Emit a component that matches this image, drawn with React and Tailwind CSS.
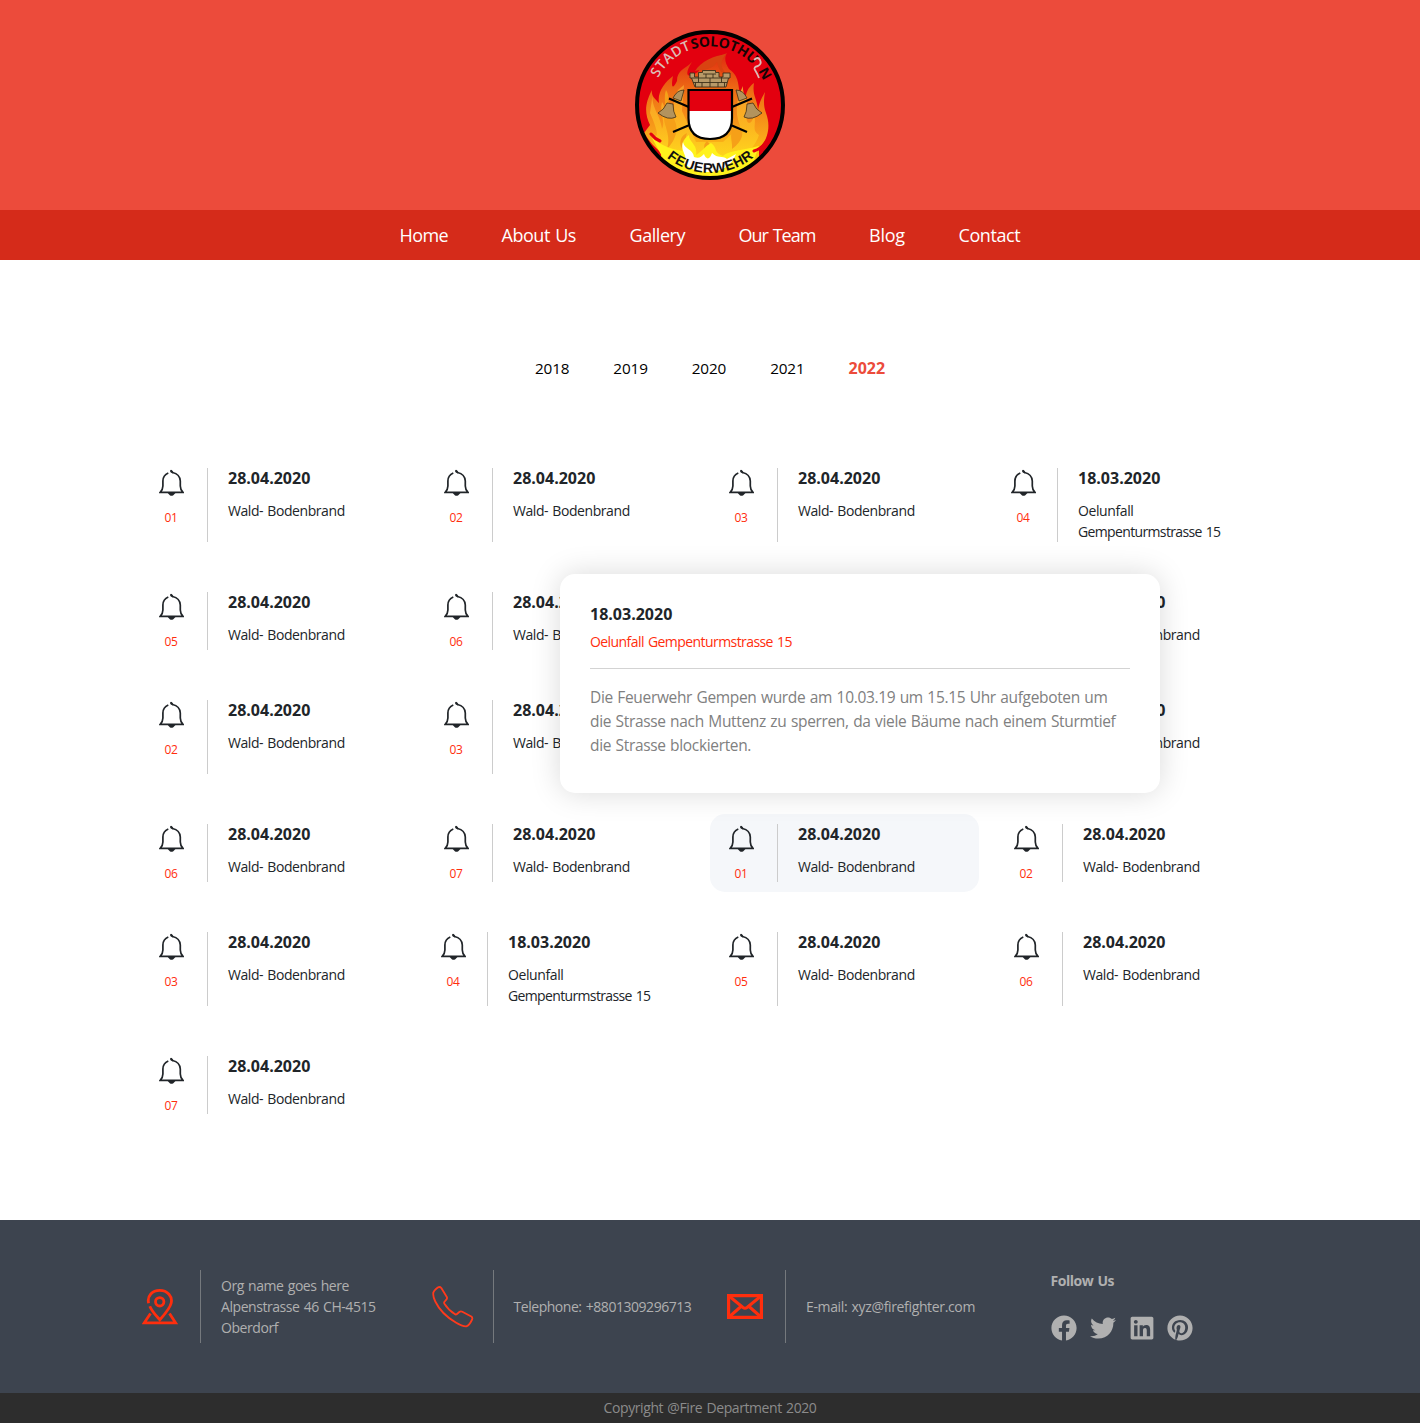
import { FaFacebook, FaTwitter, FaLinkedin, FaPinterest } from 'react-icons/fa'

const navItems = [
  { label: 'Home', style: 'w-[48px] tracking-[-0.6px]' },
  { label: 'About Us', style: 'w-[74px] tracking-[-0.45px]' },
  { label: 'Gallery', style: 'w-[55px] tracking-[-0.45px]' },
  { label: 'Our Team', style: 'w-[76.5px] tracking-[-0.98px]' },
  { label: 'Blog', style: 'w-[35.5px] tracking-[-0.25px]' },
  { label: 'Contact', style: 'w-[62px] tracking-[-0.4px]' },
]

const years = ['2018', '2019', '2020', '2021', '2022']

const cycle = ['01', '02', '03', '04', '05', '06', '07']
const incidents = [...cycle, ...cycle, ...cycle].map((number, i) => ({
  number,
  long: number === '04',
  active: i === 14,
}))

function Logo() {
  return (
    <svg viewBox="0 0 150 150" className="size-[150px]">
      <defs>
        <linearGradient id="flame" x1="0" y1="0" x2="0" y2="1">
          <stop offset="0" stopColor="#df2a10" />
          <stop offset="0.3" stopColor="#ee6d15" />
          <stop offset="0.65" stopColor="#f9a51a" />
          <stop offset="1" stopColor="#fff200" />
        </linearGradient>
        <linearGradient id="flameCore" x1="0" y1="0" x2="0" y2="1">
          <stop offset="0" stopColor="#f8982a" />
          <stop offset="0.5" stopColor="#fcb81f" />
          <stop offset="1" stopColor="#ffe61c" />
        </linearGradient>
        <clipPath id="disc"><circle cx="75" cy="75" r="72" /></clipPath>
        <path id="topArc" d="M16.500 75a58.500 58.500 0 0 1 117 0" />
        <path id="bottomArc" d="M7 75a68 68 0 0 0 136 0" />
      </defs>
      <circle cx="75" cy="75" r="73" fill="#e3000f" />
      <g clipPath="url(#disc)">
        <path fill="url(#flame)" d="M9 103C15 112 20 118 26 122V150H124V118C133 110 136 96 131 83C128 75 129 68 130 62C126 69 124 74 123 80C122 68 117 66 119 53C109 60 112 70 108 70C101 59 107 48 94 39C90 33 89 28 92 23C78 28 69 33 63 42C53 49 48 46 57 32C50 39 42 40 42 51C37 61 36 56 38 46C30 52 22 62 24 73C20 69 16 66 17 60C9 75 10 84 15 95Z" />
        <path fill="#d94311" d="M60 41C66 31 79 26 91 24C83 34 87 40 94 46C88 46 83 39 82 32C78 40 70 39 60 41Z" />
        <path fill="url(#flameCore)" d="M18 62C15 77 25 83 27 99C31 92 24 83 27 72C33 80 26 88 38 101C42 86 35 77 43 60L49 55L47 81L61 112L88 112L105 96C99 80 102 68 108 56C107 66 116 72 112 85C110 93 116 98 119 85C122 94 116 100 124 105C119 121 101 134 76 143C46 141 25 125 18 106C27 110 18 90 15 83Z" />
        <path fill="#f6a018" d="M31 60C37 70 30 77 38 88C45 97 41 110 32 119C37 104 27 94 29 83C32 77 28 68 31 60ZM102 94C111 101 108 111 97 119C98 109 92 105 102 94ZM52 103C48 113 55 117 51 124C42 115 45 106 52 103ZM72 111C78 116 76 124 70 128C72 120 66 117 72 111Z" />
        <path fill="#fff21c" d="M17 108C28 117 38 119 47 121C46 112 50 108 54 105C54 113 63 114 61 125C69 120 69 117 76 113C83 118 78 122 88 126C93 121 104 121 124 116L112 150H40Z" />
        <path fill="#fff" d="M48 112C49 119 58 119 59 127C64 129 66 127 69 124C71 130 75 130 77 123C83 129 87 125 92 129L101 124C96 136 87 142 72 142C62 142 53 138 49 133C54 126 45 122 48 112Z" />
        <path d="M16 104q4 5 9 7M119 121q7-2 12-9" fill="none" stroke="#e3000f" strokeWidth="3" strokeLinecap="round" />
      </g>
      <circle cx="75" cy="75" r="73" fill="none" stroke="#000" strokeWidth="4" />
      <g stroke="#000" strokeWidth="2.200" fill="none">
        <path d="M34 68.500L112 102M117 68.500L38 102" />
      </g>
      <g fill="#b3935d" stroke="#2b2110" strokeWidth="0.700">
        <path d="M32 73L38 74Q38 82 41 87Q33 91 23 83Q29 80 32 73Z" />
        <path d="M38 68Q42 60 49 60L46 71Z" />
        <path d="M118 73L112 74Q112 82 109 87Q117 91 127 83Q121 80 118 73Z" />
        <path d="M112 68Q108 60 101 60L104 71Z" />
      </g>
      <g stroke="#3d301a" strokeWidth="0.900">
        <path fill="#b99a68" d="M55 43h4.500v4h4v-4.500h4v-2h13v2h3.500v4.500h4v-4H95V48h-1.500L91 57H60L56.500 48H55Z" />
        <path fill="none" d="M56.500 48H93.500M58 52.500H92M68 44h13M63.500 47v5M71 44v4M78 44v4M86.500 47v5M75 48v4.500M67 52.500V57M83 52.500V57M75 52.500V57M60.500 52.500V57M89.500 52.500V57" />
      </g>
      <path fill="#fff" d="M53.500 60H97V88Q97 109 75 109Q53.500 109 53.500 88Z" />
      <path fill="#e3000f" d="M53.500 60H97V81H53.500Z" />
      <path d="M53.500 60H97V88Q97 109 75 109Q53.500 109 53.500 88Z" fill="none" stroke="#000" strokeWidth="2.200" />
      <text className="font-['Open_Sans'] text-[14px] font-semibold" fill="#dcbcb7">
        <textPath href="#topArc" startOffset="28" textLength="44.500">STADT</textPath>
      </text>
      <text className="font-['Open_Sans'] text-[14px] font-bold" fill="#150505">
        <textPath href="#topArc" startOffset="73.500" textLength="66">SOLOTHU</textPath>
      </text>
      <path d="M119 30q4-4 6 0t-2 6q-5 1-3 4t4 8" fill="none" stroke="#dcbcb7" strokeWidth="1.800" />
      <text className="font-['Open_Sans'] text-[14px] font-bold" fill="#150505">
        <textPath href="#topArc" startOffset="147.500">N</textPath>
      </text>
      <text className="font-['Liberation_Sans'] text-[14px] font-bold" fill="#111">
        <textPath href="#bottomArc" startOffset="60" textLength="94">FEUERWEHR</textPath>
      </text>
    </svg>
  )
}

function Bell() {
  return (
    <svg viewBox="0 0 25 28" className="h-[28px] w-[25px] shrink-0" fill="none" stroke="#212529" strokeWidth="1.700">
      <path d="M12 1.200L13.600 3.500Q20.800 5 21.300 12V17Q21.300 20.500 24 23.400H1.200Q3.900 20.500 3.900 17V12Q4 6.200 9.300 4" />
      <path d="M8.500 23.800H16.700L14.300 26.200Q12.500 27.400 10.800 26.200Z" fill="#212529" stroke="none" />
      <path d="M11.300 .8L14.400 3L13.600 4.400L11.200 2.900Z" fill="#212529" stroke="none" />
    </svg>
  )
}

function Incident({ number, long, active }) {
  return (
    <li className={active ? 'mr-4 flex rounded-[15px] bg-[#f5f7fa] p-2.5' : 'mr-4 flex p-2.5'}>
      <div className={long ? 'mr-4 flex w-[36px] shrink-0 flex-col items-center' : 'mr-[15px] flex w-[42px] shrink-0 flex-col items-center'}>
        <div className="pt-px"><Bell /></div>
        <span className="mt-3 -mb-px text-[12px] leading-[18px] tracking-[-0.3px] text-[#ff2e0d]">{number}</span>
      </div>
      <div className="min-w-0 border-l border-[#ccc] pl-5">
        <h3 className="text-[16px] leading-[21px] font-bold">{long ? '18.03.2020' : '28.04.2020'}</h3>
        {long ? (
          <p className="mt-[11px] text-[14px] leading-[21px] tracking-[-0.64px] whitespace-nowrap [word-spacing:1px]">
            <span className="tracking-[-0.4px]">Oelunfall</span><br />Gempenturmstrasse 15
          </p>
        ) : (
          <p className="mt-[11px] -mb-[6px] h-[31px] text-[14px] leading-[21px] tracking-[-0.43px] whitespace-nowrap [word-spacing:1px]">Wald- Bodenbrand</p>
        )}
      </div>
    </li>
  )
}

function DetailCard() {
  return (
    <article className="absolute top-[116px] left-[420px] h-[219px] w-[600px] rounded-[15px] bg-white px-[30px] pt-[30px] shadow-[0_0_30px_rgba(0,0,0,0.15)]">
      <h3 className="text-[16px] leading-[21px] font-bold">18.03.2020</h3>
      <p className="mt-[6px] text-[14px] leading-[21px] tracking-[-0.57px] text-[#ff2e0d] [word-spacing:1px]">Oelunfall Gempenturmstrasse 15</p>
      <hr className="mt-[16px] border-[#d3d3d3]" />
      <p className="mt-[16px] text-[15.5px] leading-6 tracking-[-0.34px] whitespace-nowrap text-[#808080] [word-spacing:0.8px]">
        Die Feuerwehr Gempen wurde am 10.03.19 um 15.15 Uhr aufgeboten um<br />
        die Strasse nach Muttenz zu sperren, da viele Bäume nach einem Sturmtief<br />
        die Strasse blockierten.
      </p>
    </article>
  )
}

function PinIcon() {
  return (
    <svg viewBox="0 0 36 36" className="h-9 w-9" fill="none" stroke="#ff2e0d" strokeWidth="2.800">
      <path d="M6.600 14.300C4.800 6.500 10.500 1.400 17.700 1.400C25.500 1.400 30.700 7.500 29.200 14C28 19.500 23 25 17.800 30.800C14 26.500 10 22.500 7.800 17.200" />
      <circle cx="17.700" cy="12.800" r="4.200" />
      <path d="M8.500 24.500L2.300 33.800H33.500L27.500 24.500" />
    </svg>
  )
}

function PhoneIcon() {
  return (
    <svg viewBox="0 0 42 42" className="size-[42px]" fill="none" stroke="#ff3a1c" strokeWidth="1.800" strokeLinejoin="round">
      <path d="M1.300 7Q1.300 5 5.800 1.500Q7.800 .2 9.300 2L14.800 11Q15.500 12.500 14.300 13.700L12.300 16Q11.800 17 12.600 18Q16.300 24 22.800 28Q23.800 29 25 28L27.300 26Q28.800 25 30.300 25.800L39.300 30.500Q40.800 31.500 40.100 33.500Q37.300 39.500 34.300 40.300Q30.300 40.500 23.800 36.500Q9.300 28 3.300 15.500Q.8 10.500 1.300 7Z" />
    </svg>
  )
}

function MailIcon() {
  return (
    <svg viewBox="0 0 36 25" className="h-[25px] w-9" fill="none" stroke="#ff2e0d" strokeWidth="3.400">
      <path d="M1.500 1.500H34.500V23.500H1.500Z" />
      <path d="M2 2L16 13.500Q18 15 20 13.500L34 2M2 23L14 12.500M34 23L22 12.500" strokeWidth="3" />
    </svg>
  )
}

function Contact({ icon, children }) {
  return (
    <div className="flex h-[73px] w-[292.5px] items-center">
      <div className="flex w-[80px] justify-center">{icon}</div>
      <div className="flex h-full items-center border-l border-[#75797d] pl-5">{children}</div>
    </div>
  )
}

export default function App() {
  return (
    <div className="w-full bg-white font-['Open_Sans','Noto_Sans',sans-serif] text-[#212529]">
      <header>
        <div className="flex h-[210px] items-center justify-center bg-[#ec4b3b]"><Logo /></div>
        <nav className="flex h-[50px] items-center justify-center gap-[54px] bg-[#d52b1a] text-[18px] whitespace-nowrap text-white [word-spacing:1px]">
          {navItems.map((item) => <a key={item.label} className={item.style}>{item.label}</a>)}
        </nav>
      </header>
      <main className="h-[960px] pt-[96px]">
        <div className="flex h-6 justify-center gap-[44px] text-[16px] leading-6 text-black">
          {years.map((year) => (
            <a key={year} className={year === '2022' ? 'w-[36.5px] font-bold text-[#ec4b3b]' : 'w-[34.4px] text-[15.3px] tracking-[-0.13px]'}>{year}</a>
          ))}
        </div>
        <section className="relative mx-auto mt-[78px] w-[1140px]">
          <ul className="grid grid-cols-4 gap-y-[30px]">
            {incidents.map((incident, i) => <Incident key={i} {...incident} />)}
          </ul>
          <DetailCard />
        </section>
      </main>
      <footer>
        <div className="flex h-[173px] bg-[#3d444f] pt-[50px] pl-[120px] text-[14px] leading-[21px] whitespace-nowrap text-[#b0b0b0] [word-spacing:1px]">
          <Contact icon={<PinIcon />}>
            <p className="tracking-[-0.44px]">Org name goes here<br />Alpenstrasse 46 CH-4515<br />Oberdorf</p>
          </Contact>
          <Contact icon={<PhoneIcon />}><p className="tracking-[-0.46px]">Telephone: +8801309296713</p></Contact>
          <Contact icon={<MailIcon />}><p className="tracking-[-0.35px]">E-mail: xyz@firefighter.com</p></Contact>
          <div className="ml-[53px]">
            <h4 className="font-bold tracking-[-0.46px]">Follow Us</h4>
            <div className="mt-[24px] flex items-center text-[26px]">
              <FaFacebook />
              <FaTwitter className="ml-[13px]" />
              <FaLinkedin className="ml-[13px]" />
              <FaPinterest className="ml-[12px]" />
            </div>
          </div>
        </div>
        <p className="h-[30px] bg-[#2d2d2d] text-center text-[14px] leading-[30px] tracking-[-0.41px] text-[#8b8b8b] [word-spacing:1px]">Copyright @Fire Department 2020</p>
      </footer>
    </div>
  )
}
